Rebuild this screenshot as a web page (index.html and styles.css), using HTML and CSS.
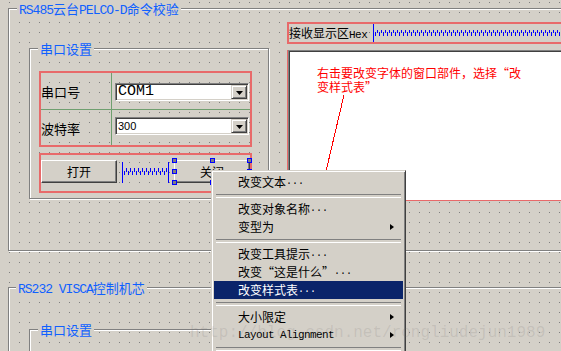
FILE: index.html
```html
<!DOCTYPE html>
<html lang="zh-CN">
<head>
<meta charset="utf-8">
<title>Designer</title>
<link rel="stylesheet" href="styles.css">
</head>
<body>
<div class="form">
  <div class="group g1">
    <span class="gtitle t1"><span class="lat">RS485</span>云台<span class="lat">PELCO-D</span>命令校验</span>
    <div class="group inner i1">
      <span class="gtitle ti">串口设置</span>
      <div class="layout lgrid">
        <div class="cell lab r1">串口号</div>
        <div class="cell val r1">
          <div class="combo"><span class="ctext mono">COM1</span><span class="dbtn"><svg width="7" height="4" viewBox="0 0 7 4"><polygon points="0,0 7,0 3.5,4" fill="#000"/></svg></span></div>
        </div>
        <div class="cell lab r2">波特率</div>
        <div class="cell val r2">
          <div class="combo"><span class="ctext sans">300</span><span class="dbtn"><svg width="7" height="4" viewBox="0 0 7 4"><polygon points="0,0 7,0 3.5,4" fill="#000"/></svg></span></div>
        </div>
      </div>
      <div class="layout hbox">
        <div class="btn">打开</div>
        <svg class="spacer" width="47" height="21" viewBox="0 0 47 21">
          <defs>
            <pattern id="zz1" x="0" y="6" width="4" height="7" patternUnits="userSpaceOnUse">
              <rect x="0" y="0" width="1" height="4" fill="#0000ff"/>
              <rect x="2" y="3" width="1" height="4" fill="#0000ff"/>
            </pattern>
          </defs>
          <rect x="0" y="0" width="1" height="21" fill="#0000ff"/>
          <rect x="46" y="0" width="1" height="21" fill="#0000ff"/>
          <rect x="2" y="6" width="43" height="7" fill="url(#zz1)"/>
        </svg>
        <div class="btn sel">关闭
          <i class="hd h1"></i><i class="hd h2"></i><i class="hd h3"></i>
          <i class="hd h4"></i><i class="hd h5"></i>
          <i class="hd h6"></i><i class="hd h7"></i><i class="hd h8"></i>
        </div>
      </div>
    </div>
    <div class="rpanel">
      <div class="layout rbar">
        <span class="rlabel">接收显示区<span class="lat">Hex</span></span>
        <svg class="spring" width="250" height="18" viewBox="0 0 250 18">
          <defs>
            <pattern id="zz2" x="0" y="6" width="4" height="6" patternUnits="userSpaceOnUse">
              <rect x="0" y="0" width="1" height="3" fill="#0000ff"/>
              <rect x="2" y="2" width="1" height="4" fill="#0000ff"/>
            </pattern>
          </defs>
          <rect x="0" y="0" width="1" height="18" fill="#0000ff"/>
          <rect x="2" y="6" width="248" height="6" fill="url(#zz2)"/>
        </svg>
      </div>
      <div class="tewrap"><div class="textedit"></div></div>
    </div>
  </div>
  <div class="group g2">
    <span class="gtitle t2"><span class="lat">RS232 VISCA</span>控制机芯</span>
    <div class="group inner i2">
      <span class="gtitle ti">串口设置</span>
    </div>
  </div>
</div>

<div class="note">右击要改变字体的窗口部件，选择<span class="ql">“</span>改<br>变样式表<span class="qr">”</span></div>
<svg class="pointer" width="561" height="351" viewBox="0 0 561 351">
  <line x1="344" y1="95" x2="318" y2="205" stroke="#ff0000" stroke-width="1" shape-rendering="crispEdges"/>
</svg>

<div class="menu">
  <div class="mi">改变文本<span class="dots">...</span></div>
  <div class="msep"></div>
  <div class="mi">改变对象名称<span class="dots">...</span></div>
  <div class="mi sub">变型为</div>
  <div class="msep"></div>
  <div class="mi">改变工具提示<span class="dots">...</span></div>
  <div class="mi">改变<span class="ql">“</span>这是什么<span class="qr">”</span><span class="dots">...</span></div>
  <div class="mi act">改变样式表<span class="dots">...</span></div>
  <div class="msep"></div>
  <div class="mi sub">大小限定</div>
  <div class="mi sub"><span class="latm">Layout Alignment</span></div>
  <div class="msep"></div>
</div>

<div class="watermark">http://blog.csdn.net/rongliudejun1989</div>
</body>
</html>
```

FILE: styles.css
```css
* { box-sizing: border-box; }
html, body { margin: 0; padding: 0; }
body {
  width: 561px;
  height: 351px;
  overflow: hidden;
  position: relative;
  background-color: #d4d0c8;
  background-image: url("data:image/svg+xml,%3Csvg xmlns='http://www.w3.org/2000/svg' width='10' height='10'%3E%3Crect width='1' height='1' fill='%23808080'/%3E%3C/svg%3E");
  background-position: 9px 2px;
  font-family: "Noto Sans CJK SC", sans-serif;
  font-size: 12px;
  color: #000;
}

.lat { font-family: "Liberation Mono", "Noto Sans CJK SC", monospace; font-size: 13px; letter-spacing: -1px; }
.latm { font-family: "Liberation Mono", monospace; font-size: 11px; letter-spacing: -0.6px; }
.mono { font-family: "Liberation Mono", monospace; font-size: 15px; }
.sans { font-family: "Liberation Sans", sans-serif; font-size: 11px; }

.form { padding: 8px 0 0 8px; }

.group {
  position: relative;
  border: 1px solid #808080;
  box-shadow: inset 1px 1px 0 #fff, 1px 1px 0 #fff;
}
.gtitle {
  position: absolute;
  top: -8px;
  height: 15px;
  line-height: 15px;
  padding: 0 2px;
  background: #d4d0c8;
  color: #1060ff;
  font-size: 13px;
  white-space: nowrap;
  z-index: 1;
}
.t1 { left: 8px; }
.t2 { left: 7px; }
.ti { left: 8px; }

.g1 {
  width: 620px;
  height: 243px;
  display: flex;
  align-items: flex-start;
}
.i1 {
  flex: 0 0 240px;
  height: 151px;
  margin: 39px 0 0 20px;
  padding: 22px 0 0 9px;
}

.layout { border: 2px solid #e86a6a; width: 213px; }

.lgrid {
  height: 76px;
  display: grid;
  grid-template-columns: 71px 138px;
  grid-template-rows: 37px 35px;
}
.cell.lab {
  border-right: 1px solid #6f9f6f;
  display: flex;
  align-items: center;
  font-size: 13px;
  padding-top: 1px;
}
.cell.r1 { border-bottom: 1px solid #6f9f6f; }
.cell.val.r1 { padding: 10px 0 0 3px; }
.cell.val.r2 { padding: 7px 0 0 3px; }

.combo {
  width: 134px;
  height: 18px;
  border: 1px solid;
  border-color: #808080 #fff #fff #808080;
  box-shadow: inset 1px 1px 0 #404040, inset -1px -1px 0 #d4d0c8;
  background: #fff;
  padding: 1px;
  display: flex;
  align-items: center;
}
.ctext { padding-left: 1px; line-height: 14px; }
.dbtn {
  margin-left: auto;
  width: 16px;
  height: 14px;
  background: #d4d0c8;
  border: 1px solid;
  border-color: #d4d0c8 #404040 #404040 #d4d0c8;
  box-shadow: inset 1px 1px 0 #fff, inset -1px -1px 0 #808080;
  display: flex;
  align-items: center;
  justify-content: center;
}
.dbtn svg { display: block; margin-top: 1px; }

.hbox {
  margin-top: 6px;
  height: 40px;
  display: flex;
  align-items: flex-start;
  gap: 5px;
  padding-top: 5px;
}
.btn {
  position: relative;
  width: 76px;
  height: 23px;
  flex: 0 0 76px;
  background: #d4d0c8;
  border: 1px solid;
  border-color: #fff #404040 #404040 #fff;
  box-shadow: inset -1px -1px 0 #808080;
  display: flex;
  align-items: center;
  justify-content: center;
  font-size: 12px;
}
.spacer { display: block; flex: 0 0 47px; margin-top: 2px; }

.hd {
  position: absolute;
  width: 5px;
  height: 5px;
  background: #808080;
  border: 1px solid #0000ff;
}
.h1 { left: -3px; top: -3px; }
.h2 { left: 35px; top: -3px; }
.h3 { left: 72px; top: -3px; }
.h4 { left: -3px; top: 8px; }
.h5 { left: 72px; top: 8px; }
.h6 { left: -3px; top: 19px; }
.h7 { left: 35px; top: 19px; }
.h8 { left: 72px; top: 19px; }

.rpanel {
  flex: 0 0 320px;
  margin: 13px 0 0 18px;
}
.rbar {
  width: auto;
  height: 22px;
  display: flex;
  align-items: stretch;
}
.rlabel {
  width: 84px;
  flex: 0 0 84px;
  line-height: 18px;
  font-size: 12px;
  white-space: nowrap;
}
.rlabel .lat { font-size: 11px; letter-spacing: -0.5px; }
.spring { display: block; flex: 0 0 auto; }

.tewrap {
  margin-top: 6px;
  border-left: 1px solid #e86a6a;
  border-bottom: 1px solid #e86a6a;
}
.textedit {
  height: 150px;
  background: #fff;
  border: 1px solid;
  border-color: #808080 #fff #fff #808080;
  box-shadow: inset 1px 1px 0 #404040;
}

.g2 {
  width: 620px;
  height: 200px;
  margin-top: 36px;
  padding: 41px 0 0 20px;
}
.i2 { width: 240px; height: 100px; }

.ql, .qr { display: inline-block; width: 12px; }
.ql { text-align: right; }
.qr { text-align: left; }

.note {
  position: absolute;
  left: 317px;
  top: 66px;
  color: #ff0000;
  font-size: 12px;
  line-height: 14px;
  white-space: nowrap;
}
.pointer { position: absolute; left: 0; top: 0; pointer-events: none; }

.menu {
  position: absolute;
  left: 211px;
  top: 170px;
  width: 195px;
  height: 200px;
  background: #d4d0c8;
  border: 1px solid;
  border-color: #d4d0c8 #404040 #404040 #d4d0c8;
  box-shadow: inset 1px 1px 0 #fff, inset -1px -1px 0 #808080;
  padding: 2px;
}
.mi {
  height: 18px;
  line-height: 18px;
  padding-left: 24px;
  display: flex;
  align-items: center;
  white-space: nowrap;
  font-size: 12px;
}
.mi.act { background: #0a246a; color: #fff; }
.mi.sub::after {
  content: "";
  margin-left: auto;
  margin-right: 9px;
  width: 0;
  height: 0;
  border-style: solid;
  border-width: 3.5px 0 3.5px 4px;
  border-color: transparent transparent transparent #000;
}
.dots { font-family: "Liberation Mono", monospace; font-size: 10px; }
.msep {
  height: 9px;
  margin: 0 2px;
  padding-top: 3px;
}
.msep::before {
  content: "";
  display: block;
  height: 2px;
  border-top: 1px solid #808080;
  border-bottom: 1px solid #fff;
}

.watermark {
  position: absolute;
  left: 190px;
  top: 324px;
  font-family: "Liberation Mono", monospace;
  font-size: 16px;
  color: rgba(110, 110, 110, 0.16);
  white-space: nowrap;
  pointer-events: none;
}
```
